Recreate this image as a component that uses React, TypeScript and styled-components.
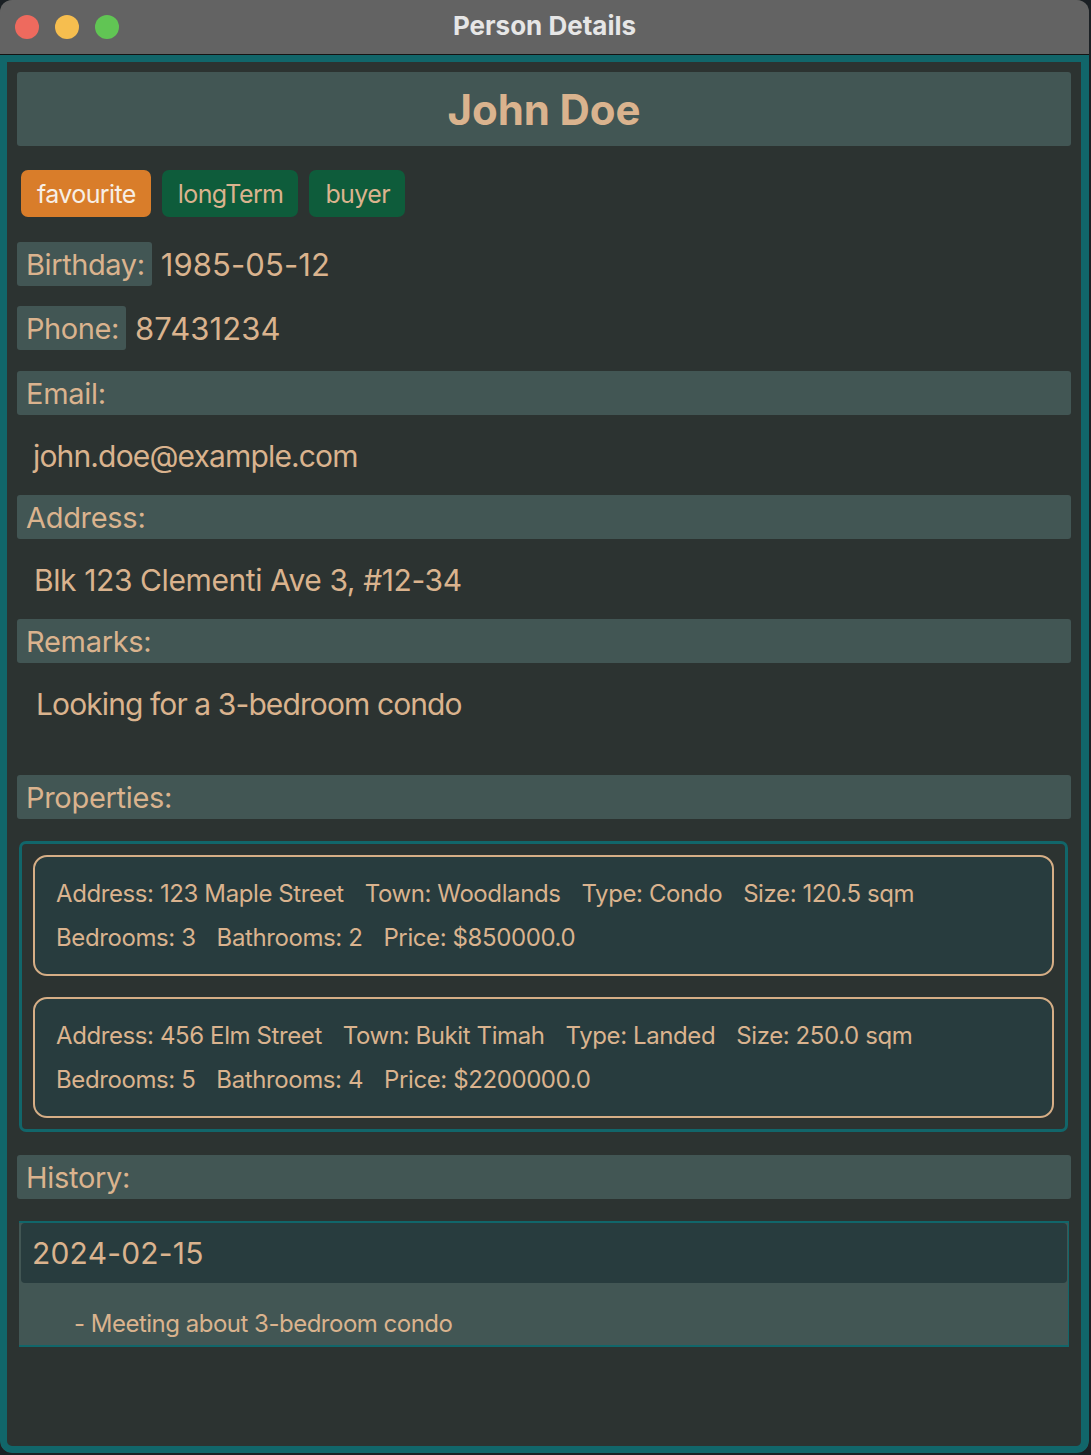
import React from "react";
import styled, { createGlobalStyle } from "styled-components";

const TAN = "#dab38e";
const TEAL = "#11666a";
const BG = "#2c3331";
const BAR = "#425654";
const CARD = "#283c3e";

const GlobalStyle = createGlobalStyle`
  html, body {
    margin: 0;
    padding: 0;
    background: #1b2024;
  }
  body {
    font-family: Inter, "Open Sans", "Noto Sans", sans-serif;
  }
  * { box-sizing: border-box; }
`;

const Window = styled.div`
  width: 1089px;
  height: 1453px;
  display: flex;
  flex-direction: column;
  border-radius: 12px;
  overflow: hidden;
  background: ${BG};
`;

const TitleBar = styled.div`
  height: 55px;
  flex: none;
  background: #636363;
  border-bottom: 1px solid #141414;
  display: grid;
  grid-template-columns: 1fr auto 1fr;
  align-items: center;
  padding: 0 15px;
`;

const Lights = styled.div`
  display: flex;
  gap: 16px;
  align-items: center;
`;

const Light = styled.span<{ $color: string }>`
  width: 24px;
  height: 24px;
  border-radius: 50%;
  background: ${(p) => p.$color};
`;

const Title = styled.div`
  color: #e6e6e6;
  font-family: Inter, "Liberation Sans", sans-serif;
  font-weight: 700;
  font-size: 26px;
  padding-bottom: 4px;
`;

const Frame = styled.div`
  flex: 1;
  border-style: solid;
  border-color: ${TEAL};
  border-width: 7px 8px 7px 7px;
  border-radius: 0 0 12px 12px;
  background: ${BG};
  padding: 10px;
  display: flex;
  flex-direction: column;
  color: ${TAN};
`;

const NameBar = styled.div`
  height: 74px;
  background: ${BAR};
  border-radius: 3px;
  display: flex;
  align-items: center;
  justify-content: center;
  font-size: 42px;
  font-weight: 700;
  letter-spacing: -0.1px;
`;

const Tags = styled.div`
  display: flex;
  gap: 11px;
  margin: 24px 0 0 4px;
`;

const Tag = styled.span<{ $kind: "orange" | "green" }>`
  height: 47px;
  padding: 0 15px 0 16px;
  display: flex;
  align-items: center;
  border-radius: 7px;
  font-size: 25px;
  letter-spacing: -0.6px;
  background: ${(p) => (p.$kind === "orange" ? "#d97d2a" : "#0e5c3b")};
  color: ${(p) => (p.$kind === "orange" ? "#f7efe6" : TAN)};
`;

const InlineRow = styled.div<{ $top: number }>`
  display: flex;
  align-items: center;
  gap: 9px;
  margin-top: ${(p) => p.$top}px;
`;

const InlineLabel = styled.span`
  height: 44px;
  padding: 0 7px 0 9px;
  background: ${BAR};
  border-radius: 3px;
  display: flex;
  align-items: center;
  font-size: 29px;
  letter-spacing: -0.4px;
`;

const InlineValue = styled.span`
  font-size: 31px;
  letter-spacing: 0.1px;
`;

const SectionBar = styled.div<{ $top: number }>`
  height: 44px;
  margin-top: ${(p) => p.$top}px;
  background: ${BAR};
  border-radius: 3px;
  display: flex;
  align-items: center;
  padding-left: 9px;
  font-size: 29px;
  letter-spacing: -0.3px;
`;

const ValueArea = styled.div<{ $height: number; $indent: number; $spacing: number }>`
  height: ${(p) => p.$height}px;
  padding: 23px 0 0 ${(p) => p.$indent}px;
  font-size: 30px;
  letter-spacing: ${(p) => p.$spacing}px;
  line-height: 36px;
`;

const PropList = styled.div`
  margin: 22px 3px 0 2px;
  border: 3px solid ${TEAL};
  border-radius: 7px;
  padding: 11px 11px;
  display: flex;
  flex-direction: column;
  gap: 21px;
`;

const PropCard = styled.div`
  height: 121px;
  border: 2px solid #d6ae86;
  border-radius: 14px;
  background: ${CARD};
  padding: 14px 20px 0 21px;
  display: flex;
  flex-direction: column;
`;

const PropLine = styled.div`
  height: 44px;
  display: flex;
  align-items: center;
  gap: 21px;
  font-size: 24px;
  letter-spacing: -0.4px;
`;

const HistoryItem = styled.div`
  margin: 22px 2px 0 2px;
  height: 126px;
  background: ${BAR};
  border-top: 2px solid ${TEAL};
  border-bottom: 2px solid ${TEAL};
  border-right: 1px solid ${TEAL};
  padding: 0 1px 0 2px;
  display: flex;
  flex-direction: column;
`;

const HistoryDate = styled.div`
  height: 60px;
  background: ${CARD};
  border-radius: 4px;
  display: flex;
  align-items: center;
  padding-left: 11px;
  font-size: 30px;
  letter-spacing: 0.2px;
`;

const HistoryNote = styled.div`
  flex: 1;
  display: flex;
  align-items: flex-end;
  padding: 0 0 7px 53px;
  font-size: 24px;
  letter-spacing: -0.5px;
`;

const properties = [
  {
    line1: ["Address: 123 Maple Street", "Town: Woodlands", "Type: Condo", "Size: 120.5 sqm"],
    line2: ["Bedrooms: 3", "Bathrooms: 2", "Price: $850000.0"],
  },
  {
    line1: ["Address: 456 Elm Street", "Town: Bukit Timah", "Type: Landed", "Size: 250.0 sqm"],
    line2: ["Bedrooms: 5", "Bathrooms: 4", "Price: $2200000.0"],
  },
];

export default function App() {
  return (
    <>
      <GlobalStyle />
      <Window>
        <TitleBar>
          <Lights>
            <Light $color="#ee6a5e" />
            <Light $color="#f6be4f" />
            <Light $color="#61c554" />
          </Lights>
          <Title>Person Details</Title>
          <span />
        </TitleBar>
        <Frame>
          <NameBar>John Doe</NameBar>
          <Tags>
            <Tag $kind="orange">favourite</Tag>
            <Tag $kind="green">longTerm</Tag>
            <Tag $kind="green">buyer</Tag>
          </Tags>
          <InlineRow $top={25}>
            <InlineLabel>Birthday:</InlineLabel>
            <InlineValue>1985-05-12</InlineValue>
          </InlineRow>
          <InlineRow $top={20}>
            <InlineLabel>Phone:</InlineLabel>
            <InlineValue>87431234</InlineValue>
          </InlineRow>
          <SectionBar $top={21}>Email:</SectionBar>
          <ValueArea $height={80} $indent={16} $spacing={-0.85}>
            john.doe@example.com
          </ValueArea>
          <SectionBar $top={0}>Address:</SectionBar>
          <ValueArea $height={80} $indent={17} $spacing={-0.4}>
            Blk 123 Clementi Ave 3, #12-34
          </ValueArea>
          <SectionBar $top={0}>Remarks:</SectionBar>
          <ValueArea $height={112} $indent={19} $spacing={-0.9}>
            Looking for a 3-bedroom condo
          </ValueArea>
          <SectionBar $top={0}>Properties:</SectionBar>
          <PropList>
            {properties.map((p, i) => (
              <PropCard key={i}>
                <PropLine>
                  {p.line1.map((t) => (
                    <span key={t}>{t}</span>
                  ))}
                </PropLine>
                <PropLine>
                  {p.line2.map((t) => (
                    <span key={t}>{t}</span>
                  ))}
                </PropLine>
              </PropCard>
            ))}
          </PropList>
          <SectionBar $top={23}>History:</SectionBar>
          <HistoryItem>
            <HistoryDate>2024-02-15</HistoryDate>
            <HistoryNote>- Meeting about 3-bedroom condo</HistoryNote>
          </HistoryItem>
        </Frame>
      </Window>
    </>
  );
}
